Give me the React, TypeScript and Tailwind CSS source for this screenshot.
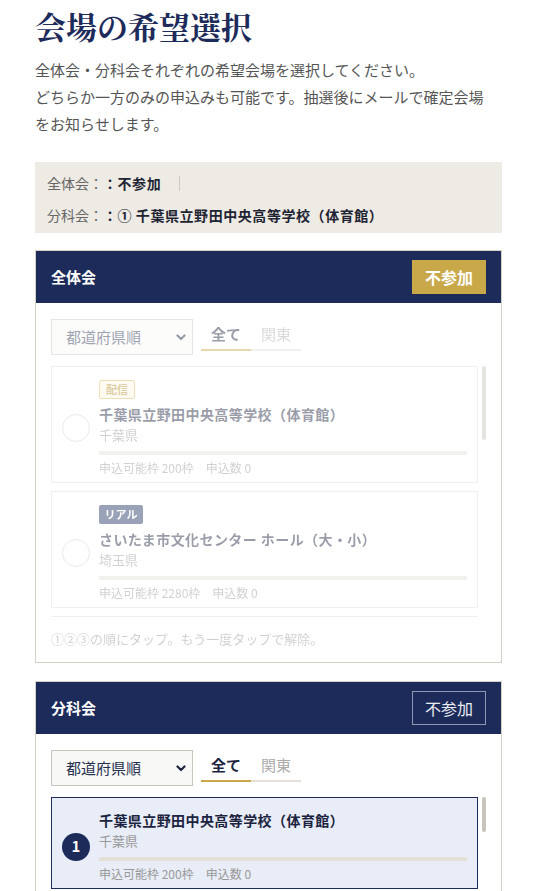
import { ReactNode } from "react";

interface Venue {
    id: string;
    name: string;
    prefecture: string;
    capacity: number;
    applied: number;
    kind?: "online" | "real";
}

const generalVenues: Venue[] = [
    { id: "noda", name: "千葉県立野田中央高等学校（体育館）", prefecture: "千葉県", capacity: 200, applied: 0, kind: "online" },
    { id: "saitama", name: "さいたま市文化センター ホール（大・小）", prefecture: "埼玉県", capacity: 2280, applied: 0, kind: "real" },
    { id: "chiba", name: "千葉市民会館 大ホール", prefecture: "千葉県", capacity: 1000, applied: 0, kind: "real" },
];

const sectionVenues: Venue[] = [
    { id: "noda", name: "千葉県立野田中央高等学校（体育館）", prefecture: "千葉県", capacity: 200, applied: 0 },
    { id: "kashiwa", name: "柏市民文化会館 小ホール", prefecture: "千葉県", capacity: 300, applied: 0 },
];

const KindBadge = ({ kind }: { kind: "online" | "real" }) => {
    if (kind === "online") {
        return (
            <span className="flex h-[19px] w-[36px] items-center justify-center rounded-[2px] border border-[#d8b85e] bg-[#fbf4df] text-[11px] font-bold text-[#b8923a]">
                配信
            </span>
        );
    }
    return (
        <span className="flex h-[19px] w-[44px] items-center justify-center rounded-[2px] bg-[#1f2f5e] text-[11px] font-bold text-white">
            リアル
        </span>
    );
};

const VenueCard = ({ venue, order }: { venue: Venue; order?: number }) => {
    const selected = order !== undefined;
    return (
        <div
            className={
                selected
                    ? "flex shrink-0 items-center border border-[#1d2b5a] bg-[#e8edf7] pl-[10px] pr-[10px] pt-3 pb-[5px]"
                    : "flex shrink-0 items-center border border-[#e2ded6] bg-white pl-[10px] pr-[10px] pt-3 pb-[5px]"
            }
        >
            {selected ? (
                <div className="flex h-7 w-7 shrink-0 items-center justify-center rounded-full bg-[#1d2b5a] text-[15px] font-bold text-white">
                    {order}
                </div>
            ) : (
                <div className="h-7 w-7 shrink-0 rounded-full border border-[#cfcfcf]" />
            )}
            <div className="ml-[9px] min-w-0 flex-1">
                {venue.kind && (
                    <div className="mt-px mb-[5px]">
                        <KindBadge kind={venue.kind} />
                    </div>
                )}
                <div className="truncate text-[14px] leading-[21px] font-bold tracking-[0.03em] text-[#1c2440]">{venue.name}</div>
                <div className="text-[13px] leading-[20px] text-[#999]">{venue.prefecture}</div>
                <div className="mt-[6px] h-1 w-full bg-[#e5e0d7]" />
                <div className="mt-1 flex gap-3 text-[12px] leading-[18px] text-[#999]">
                    <span>申込可能枠 {venue.capacity}枠</span>
                    <span>申込数 {venue.applied}</span>
                </div>
            </div>
        </div>
    );
};

const PrefSelect = () => (
    <div className="flex h-9 w-[142px] items-center justify-between border border-[#c9c5bd] bg-[#f8f8f6] pl-[14px] pr-[6px] text-[15px] text-[#26304f]">
        <span>都道府県順</span>
        <svg width="10" height="7" viewBox="0 0 10 7" fill="none">
            <path d="M1.5 1.5 L5 5 L8.5 1.5" stroke="#1c2440" strokeWidth="2.2" strokeLinecap="round" strokeLinejoin="round" />
        </svg>
    </div>
);

const Tabs = () => (
    <div className="ml-2 flex">
        <div className="flex h-8 w-[50px] items-center justify-center border-b-2 border-[#c9a84a] text-[15px] font-bold text-[#1c2440]">
            全て
        </div>
        <div className="flex h-8 w-[50px] items-center justify-center border-b-2 border-[#e4e0d8] text-[15px] text-[#aaa]">
            関東
        </div>
    </div>
);

const Panel = ({
    title,
    declined,
    thumbHeight,
    children,
}: {
    title: string;
    declined: boolean;
    thumbHeight: string;
    children: ReactNode;
}) => (
    <section className="border border-[#d6d1c7] bg-white">
        <div className="flex h-[52px] items-center justify-between bg-[#1d2b5a] px-[15px]">
            <h2 className="text-[15px] font-bold text-white">{title}</h2>
            {declined ? (
                <button className="flex h-[34px] w-[74px] items-center justify-center bg-[#c9a84a] text-[16px] font-bold text-white">
                    不参加
                </button>
            ) : (
                <button className="flex h-[34px] w-[74px] items-center justify-center border border-[#8e97b0] text-[16px] text-[#e9ecf3]">
                    不参加
                </button>
            )}
        </div>

        <div className={declined ? "px-[15px] pt-4 pb-[13px] opacity-45" : "px-[15px] pt-4 pb-[13px]"}>
            <div className="flex items-start">
                <PrefSelect />
                <Tabs />
            </div>

            <div className="mt-[11px] flex">
                <div className="flex h-[251px] w-[427px] flex-col gap-2 overflow-hidden">{children}</div>
                {/* scroll track */}
                <div className="ml-1 w-1">
                    <div className={`w-1 rounded-full bg-[#c8c3bb] ${thumbHeight}`} />
                </div>
            </div>

            <p className="mt-3 text-[13px] leading-5 text-[#999]">①②③の順にタップ。もう一度タップで解除。</p>
        </div>
    </section>
);

export default function App() {
    return (
        <div className="min-h-screen bg-white px-[35px] pt-[5px] pb-10 font-['Noto_Sans_CJK_JP','Noto_Sans',sans-serif]">
            <h1 className="font-['Noto_Serif_CJK_JP','Noto_Sans_CJK_JP',serif] text-[31px] leading-[41px] font-bold text-[#1d2b5a]">
                会場の希望選択
            </h1>
            <p className="mt-[10px] text-[15px] leading-[27px] text-[#555]">
                全体会・分科会それぞれの希望会場を選択してください。
                <br />
                どちらか一方のみの申込みも可能です。抽選後にメールで確定会場
                <br />
                をお知らせします。
            </p>

            {/* current selection summary */}
            <div className="mt-[25px] bg-[#eeebe4] px-3 pt-[9px] pb-[6px] text-[14px] leading-6">
                <div className="flex items-center">
                    <span className="text-[#666]">全体会：</span>
                    <span className="font-bold tracking-[0.04em] text-[#1f2433]">：不参加</span>
                    <span className="ml-[18px] h-[15px] w-px bg-[#cfcac1]" />
                </div>
                <div className="mt-2 flex items-center">
                    <span className="text-[#666]">分科会：</span>
                    <span className="font-bold tracking-[0.04em] text-[#1f2433]">：① 千葉県立野田中央高等学校（体育館）</span>
                </div>
            </div>

            <div className="mt-[17px]">
                <Panel title="全体会" declined thumbHeight="h-[74px]">
                    {generalVenues.map((venue) => (
                        <VenueCard key={venue.id} venue={venue} />
                    ))}
                </Panel>
            </div>

            <div className="mt-[18px]">
                <Panel title="分科会" declined={false} thumbHeight="h-[35px]">
                    {sectionVenues.map((venue, i) => (
                        <VenueCard key={venue.id} venue={venue} order={i === 0 ? 1 : undefined} />
                    ))}
                </Panel>
            </div>
        </div>
    );
}
